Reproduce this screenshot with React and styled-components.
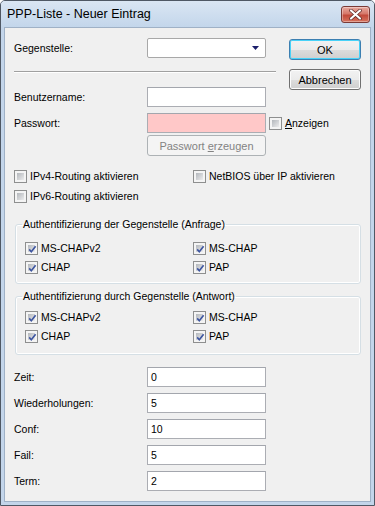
import React from "react";
import styled, { createGlobalStyle } from "styled-components";

const GlobalStyle = createGlobalStyle`
  html, body {
    margin: 0;
    padding: 0;
    background: #fff;
  }
  body {
    font-family: "Liberation Sans", Arial, sans-serif;
    font-size: 10.5px;
    font-weight: 400;
    color: #000;
  }
`;

const Window = styled.div`
  width: 375px;
  height: 506px;
  box-sizing: border-box;
  border: 1px solid #4f5864;
  border-radius: 5px 5px 0 0;
  background: #c3d5ea;
  display: flex;
  flex-direction: column;
  overflow: hidden;
`;

const TitleBar = styled.div`
  height: 26px;
  display: flex;
  align-items: center;
  padding: 0 4px 0 6px;
  background: linear-gradient(#dae6f3, #c3d6eb);
`;

const Title = styled.span`
  font-size: 12.5px;
  color: #000;
`;

const CloseButton = styled.div`
  margin-left: auto;
  width: 29px;
  height: 17px;
  box-sizing: border-box;
  border: 1px solid #7a3a36;
  border-radius: 3px;
  background: linear-gradient(#e8a99f 0%, #d6786a 45%, #c24a3b 55%, #d7735e 100%);
  display: flex;
  align-items: center;
  justify-content: center;
  box-shadow: inset 0 0 0 1px rgba(255, 255, 255, 0.35);
`;

const Client = styled.div`
  flex: 1;
  margin: 0 3px 3px 3px;
  border: 1px solid #9fb1c6;
  background: #f0f0f0;
  padding: 10px 9px 0 9px;
  display: flex;
  flex-direction: column;
`;

const TopArea = styled.div`
  display: flex;
  justify-content: space-between;
`;

const LeftColumn = styled.div`
  width: 262px;
  display: flex;
  flex-direction: column;
`;

const ButtonColumn = styled.div`
  width: 72px;
  padding-top: 1px;
  display: flex;
  flex-direction: column;
  gap: 9px;
`;

const Row = styled.div`
  display: grid;
  grid-template-columns: 133px 119px auto;
  align-items: center;
  height: ${(p) => p.$h || 20}px;
  margin-top: ${(p) => p.$mt || 0}px;
`;

const Label = styled.span`
  font-size: 10.5px;
  white-space: nowrap;
`;

const Input = styled.div`
  height: 20px;
  box-sizing: border-box;
  border: 1px solid #abadb3;
  border-top-color: #a3a6ad;
  background: ${(p) => (p.$error ? "#ffc8c8" : "#fff")};
  padding: 0 3px;
  display: flex;
  align-items: center;
  font-size: 10.5px;
`;

const Select = styled(Input)`
  border-color: #a8a8a8;
  border-radius: 2px;
  justify-content: flex-end;
  padding-right: 6px;
`;

const Separator = styled.div`
  height: 0;
  margin-top: 13px;
  border-top: 1px solid #a0a0a0;
  border-bottom: 1px solid #fff;
  width: 262px;
`;

const Button = styled.div`
  height: 21px;
  box-sizing: border-box;
  border: 1px solid ${(p) => (p.$disabled ? "#adb2b5" : p.$default ? "#3c7fb1" : "#707070")};
  border-radius: 3px;
  background: ${(p) =>
    p.$disabled
      ? "#f4f4f4"
      : "linear-gradient(#f2f2f2 0%, #ebebeb 50%, #dddddd 51%, #cfcfcf 100%)"};
  box-shadow: ${(p) =>
    p.$default ? "inset 0 0 0 1px #48d2f8" : p.$disabled ? "none" : "inset 0 0 0 1px #fcfcfc"};
  display: flex;
  align-items: center;
  justify-content: center;
  font-size: 11px;
  color: ${(p) => (p.$disabled ? "#838383" : "#000")};
`;

const CheckGrid = styled.div`
  display: grid;
  grid-template-columns: ${(p) => p.$first}px 1fr;
  grid-auto-rows: 16px;
  row-gap: ${(p) => p.$gap}px;
  margin-top: ${(p) => p.$mt || 0}px;
`;

const CheckItem = styled.div`
  display: flex;
  align-items: center;
  gap: 3px;
  font-size: 10.5px;
  font-weight: 400;
  white-space: nowrap;
  margin-left: ${(p) => p.$ml || 0}px;
`;

const Box = styled.span`
  position: relative;
  width: 13px;
  height: 13px;
  box-sizing: border-box;
  border: 1px solid #8e8f8f;
  background: #f4f4f4;
  display: flex;
  align-items: center;
  justify-content: center;
  flex-shrink: 0;

  &::before {
    content: "";
    display: block;
    width: 9px;
    height: 9px;
    box-sizing: border-box;
    border: 1px solid #f4f4f4;
    background: linear-gradient(135deg, #b3b7bc, #ececed);
  }

  svg {
    position: absolute;
    left: 1px;
    top: 1px;
  }
`;

const Group = styled.fieldset`
  margin: ${(p) => p.$mt}px 0 0 1px;
  padding: ${(p) => p.$pt}px 9px ${(p) => p.$pb}px 9px;
  border: 1px solid #d5dfe5;
  border-radius: 3px;
  box-shadow: inset 0 0 0 1px #fff;
  min-width: 0;
`;

const Legend = styled.legend`
  margin-left: -3px;
  padding: 0 1px;
  line-height: 14px;
  font-size: 10.5px;
`;

const FieldList = styled.div`
  display: flex;
  flex-direction: column;
  gap: 6px;
  margin-top: 12px;
`;

function Checkbox({ label, checked, ml }) {
  return (
    <CheckItem $ml={ml}>
      <Box>
        {checked && (
          <svg width="11" height="11" viewBox="0 0 11 11">
            <path d="M2.2 5.4 L4.3 7.8 L8.6 2.2" fill="none" stroke="#3d55a0" strokeWidth="1.6" />
          </svg>
        )}
      </Box>
      <span>{label}</span>
    </CheckItem>
  );
}

function AuthGroup({ title, mt, pt, pb }) {
  return (
    <Group $mt={mt} $pt={pt} $pb={pb}>
      <Legend>{title}</Legend>
      <CheckGrid $first={168} $gap={3}>
        <Checkbox label="MS-CHAPv2" checked />
        <Checkbox label="MS-CHAP" checked />
        <Checkbox label="CHAP" checked />
        <Checkbox label="PAP" checked />
      </CheckGrid>
    </Group>
  );
}

const counters = [
  ["Zeit:", "0"],
  ["Wiederholungen:", "5"],
  ["Conf:", "10"],
  ["Fail:", "5"],
  ["Term:", "2"],
];

export default function App() {
  return (
    <>
      <GlobalStyle />
      <Window>
        <TitleBar>
          <Title>PPP-Liste - Neuer Eintrag</Title>
          <CloseButton>
            <svg width="13" height="11" viewBox="0 0 13 11">
              <path
                d="M2 1.5 L11 9.5 M11 1.5 L2 9.5"
                stroke="#5a2a26"
                strokeWidth="3.6"
                strokeLinecap="round"
              />
              <path
                d="M2 1.5 L11 9.5 M11 1.5 L2 9.5"
                stroke="#fff"
                strokeWidth="2.2"
                strokeLinecap="round"
              />
            </svg>
          </CloseButton>
        </TitleBar>
        <Client>
          <TopArea>
            <LeftColumn>
              <Row>
                <Label>Gegenstelle:</Label>
                <Select>
                  <svg width="7" height="4" viewBox="0 0 7 4">
                    <path d="M0 0 H7 L3.5 4 Z" fill="#1b1e6b" />
                  </svg>
                </Select>
              </Row>
              <Separator />
              <Row $mt={14}>
                <Label>Benutzername:</Label>
                <Input />
              </Row>
              <Row $mt={6}>
                <Label>Passwort:</Label>
                <Input $error />
                <Checkbox
                  ml={3}
                  label={
                    <>
                      <u>A</u>nzeigen
                    </>
                  }
                />
              </Row>
              <Row $mt={2} $h={21}>
                <span />
                <Button $disabled>
                  Passwort&nbsp;<u>e</u>rzeugen
                </Button>
              </Row>
            </LeftColumn>
            <ButtonColumn>
              <Button $default>OK</Button>
              <Button>Abbrechen</Button>
            </ButtonColumn>
          </TopArea>

          <CheckGrid $first={179} $gap={4} $mt={12}>
            <Checkbox label="IPv4-Routing aktivieren" />
            <Checkbox label="NetBIOS über IP aktivieren" />
            <Checkbox label="IPv6-Routing aktivieren" />
          </CheckGrid>

          <AuthGroup title="Authentifizierung der Gegenstelle (Anfrage)" mt={13} pt={9} pb={8} />
          <AuthGroup title="Authentifizierung durch Gegenstelle (Antwort)" mt={5} pt={6} pb={10} />

          <FieldList>
            {counters.map(([label, value]) => (
              <Row key={label}>
                <Label>{label}</Label>
                <Input>{value}</Input>
              </Row>
            ))}
          </FieldList>
        </Client>
      </Window>
    </>
  );
}
